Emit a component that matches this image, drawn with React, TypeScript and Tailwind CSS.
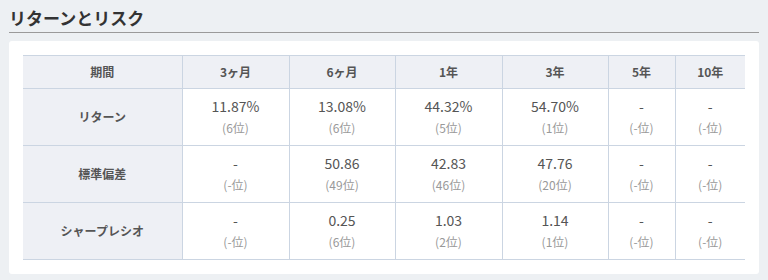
import React from "react";

const cols = ["3ヶ月", "6ヶ月", "1年", "3年", "5年", "10年"];
const widths = [159, 107, 106, 107, 106, 67, 70];

const rows: { label: string; cells: [string, string][] }[] = [
  {
    label: "リターン",
    cells: [
      ["11.87%", "(6位)"],
      ["13.08%", "(6位)"],
      ["44.32%", "(5位)"],
      ["54.70%", "(1位)"],
      ["-", "(-位)"],
      ["-", "(-位)"],
    ],
  },
  {
    label: "標準偏差",
    cells: [
      ["-", "(-位)"],
      ["50.86", "(49位)"],
      ["42.83", "(46位)"],
      ["47.76", "(20位)"],
      ["-", "(-位)"],
      ["-", "(-位)"],
    ],
  },
  {
    label: "シャープレシオ",
    cells: [
      ["-", "(-位)"],
      ["0.25", "(6位)"],
      ["1.03", "(2位)"],
      ["1.14", "(1位)"],
      ["-", "(-位)"],
      ["-", "(-位)"],
    ],
  },
];

export default function App() {
  return (
    <div
      className="w-[768px] h-[280px] bg-[#edf0f3] pl-[9px] pr-[9px] pt-[4px]"
      style={{ fontFamily: '"Noto Sans CJK JP", "Noto Sans", sans-serif' }}
    >
      <div className="border-b border-[#9a9a9a] h-[29px] text-[17px] leading-[28px] font-bold text-[#333333]">
        リターンとリスク
      </div>
      <div className="mt-[8px] w-[750px] bg-white rounded-[3px] p-[14px]">
        <table className="table-fixed border-collapse w-[722px]">
          <colgroup>
            {widths.map((w, i) => (
              <col key={i} style={{ width: w }} />
            ))}
          </colgroup>
          <thead>
            <tr className="h-[33px] bg-[#eef0f5] border-t border-b border-[#cbd5e2]">
              <th className="text-[12px] font-bold text-[#555555] border-r border-[#cbd5e2] p-0">
                期間
              </th>
              {cols.map((c, i) => (
                <th
                  key={c}
                  className={`text-[12px] font-bold text-[#555555] p-0 ${
                    i < cols.length - 1 ? "border-r border-[#cbd5e2]" : ""
                  }`}
                >
                  {c}
                </th>
              ))}
            </tr>
          </thead>
          <tbody>
            {rows.map((r) => (
              <tr key={r.label} className="h-[57px] border-b border-[#cbd5e2]">
                <th className="bg-[#eef0f5] text-[12px] font-bold text-[#555555] border-r border-[#cbd5e2] p-0">
                  {r.label}
                </th>
                {r.cells.map(([v, rank], i) => (
                  <td
                    key={i}
                    className={`text-center p-0 ${
                      i < r.cells.length - 1 ? "border-r border-[#cbd5e2]" : ""
                    }`}
                  >
                    <div className="text-[14px] leading-[22px] text-[#555555]">{v}</div>
                    <div className="text-[12px] leading-[22px] text-[#999999]">{rank}</div>
                  </td>
                ))}
              </tr>
            ))}
          </tbody>
        </table>
      </div>
    </div>
  );
}
